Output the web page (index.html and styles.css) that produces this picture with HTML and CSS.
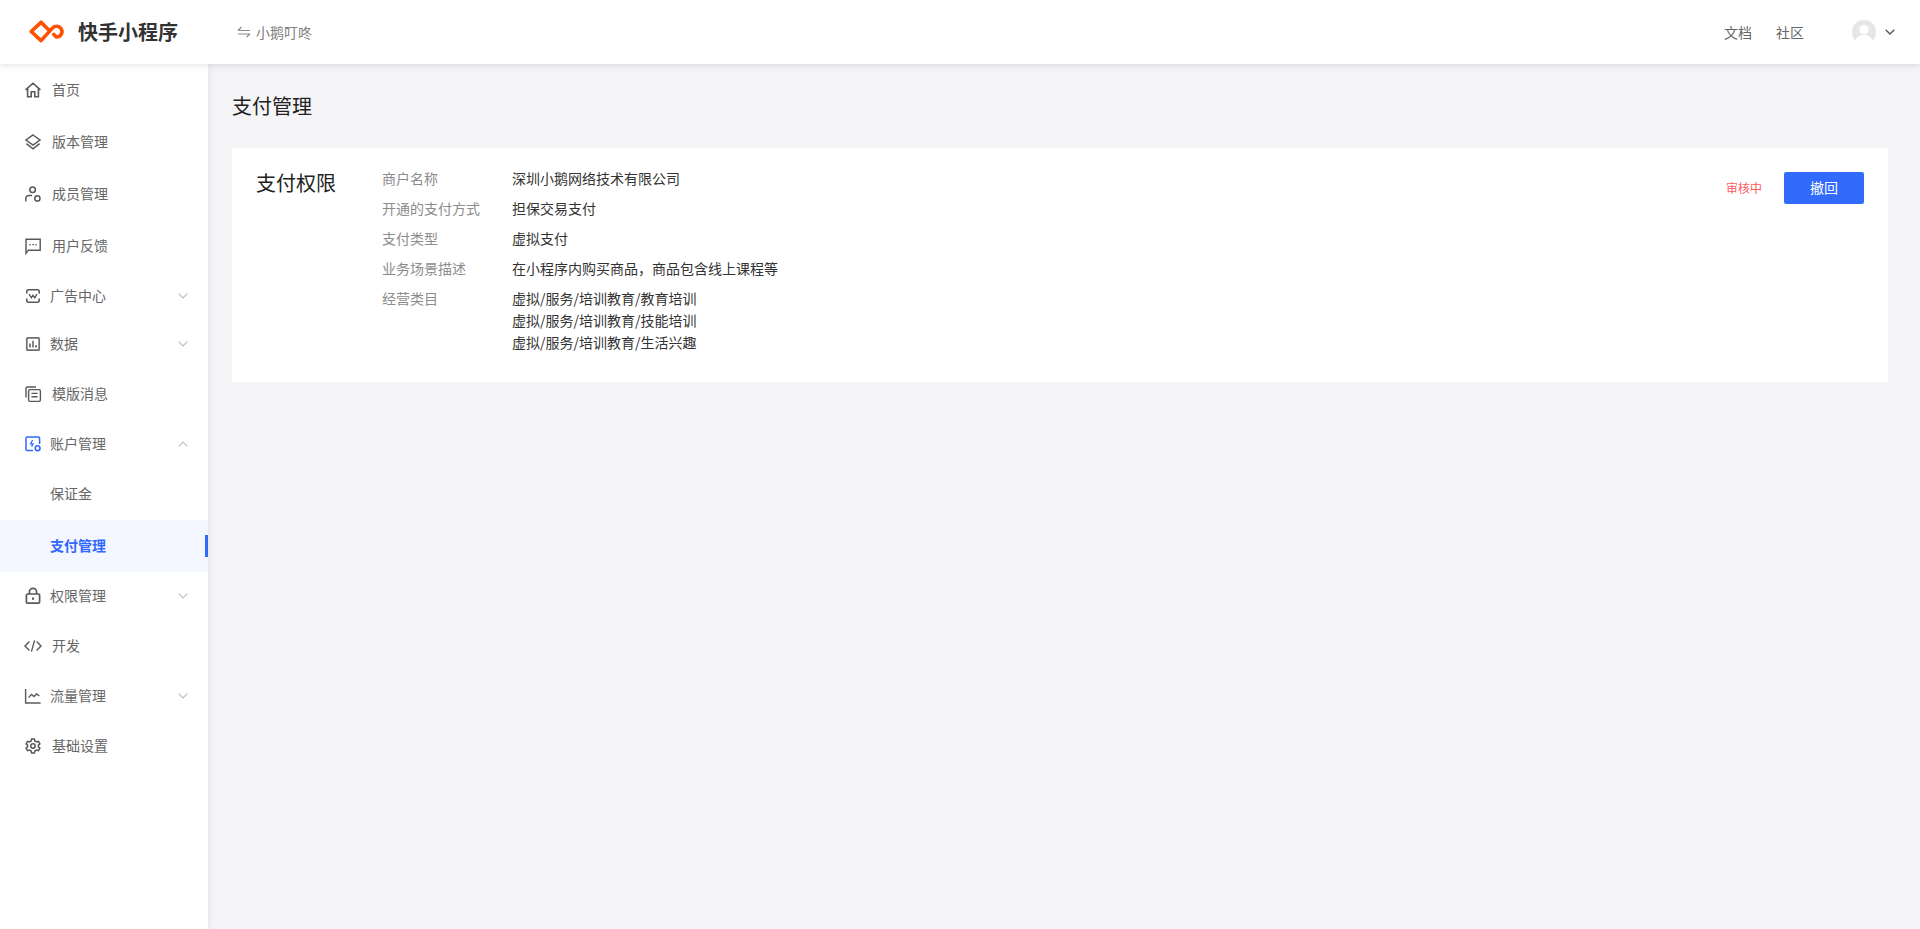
FILE: index.html
```html
<!DOCTYPE html>
<html lang="zh-CN">
<head>
<meta charset="utf-8">
<title>支付管理</title>
<link rel="stylesheet" href="styles.css">
</head>
<body>
<header class="topbar">
  <div class="brand">
    <svg class="logo" viewBox="0 0 36 26" width="36" height="26" fill="none" stroke="#ff5000" stroke-width="3.6" stroke-linejoin="round" stroke-linecap="round">
      <path d="M13 3.400 3.200 12.500 13 21.600 24.200 9.400A5.400 5.400 0 1 1 28.400 18L25.800 15.400"/>
      <path d="M13 3.400 20.600 10.800"/>
    </svg>
    <span class="brand-name">快手小程序</span>
  </div>
  <div class="app-switch">
    <svg class="switch-icon" viewBox="0 0 14 12" width="14" height="12" fill="none" stroke="#8c8c8c" stroke-width="1.200">
      <path d="M1 4.500 H13 M1 4.500 L4.500 1"/>
      <path d="M13 8 H1 M13 8 L9.500 11"/>
    </svg>
    <span>小鹅叮咚</span>
  </div>
  <nav class="top-links">
    <a>文档</a>
    <a>社区</a>
  </nav>
  <div class="account">
    <svg class="avatar" viewBox="0 0 24 24" width="24" height="24">
      <circle cx="12" cy="12" r="12" fill="#e6e6e6"/>
      <circle cx="12" cy="9.600" r="4.800" fill="#fff"/>
      <path d="M3.600 20.400C5 16.400 8 15 12 15c4 0 7 1.400 8.400 5.400C18 22.800 15 24 12 24c-3 0-6-1.200-8.400-3.600Z" fill="#fff"/>
    </svg>
    <svg class="chev-dark" viewBox="0 0 10 6" width="10" height="6" fill="none" stroke="#555" stroke-width="1.300"><path d="M.7.7 5 5 9.300.7"/></svg>
  </div>
</header>

<div class="shell">
  <aside class="sidebar">
    <a class="item">
      <svg class="ico" viewBox="0 0 16 16" fill="none" stroke="#595959" stroke-width="1.600"><path d="M.6 7.800 8 1.200l7.400 6.600M2.600 6.200V14.800h3.600V9.800h3.600v5h3.600V6.200"/></svg>
      <span>首页</span>
    </a>
    <a class="item">
      <svg class="ico" viewBox="0 0 16 16" fill="none" stroke="#595959" stroke-width="1.500"><path d="M8 1 15 6 8 11 1 6Z"/><path d="M1.400 9.600 8 14.800l6.600-5.200"/></svg>
      <span>版本管理</span>
    </a>
    <a class="item">
      <svg class="ico" viewBox="0 0 16 16" fill="none" stroke="#595959" stroke-width="1.500"><circle cx="7.600" cy="3.800" r="2.800"/><path d="M.8 15.400v-2.800c0-2 1.400-3.200 3.400-3.200H7"/><circle cx="12.400" cy="12.400" r="2.600"/></svg>
      <span>成员管理</span>
    </a>
    <a class="item">
      <svg class="ico" viewBox="0 0 16 16" fill="none" stroke="#595959" stroke-width="1.400"><path d="M1 15.400V1.200H15.200V12.200H3.400L1 15.400Z"/><path d="M4.400 6.600h1.400M7.400 6.600h1.400M10.400 6.600h1.400" stroke-width="1.200"/></svg>
      <span>用户反馈</span>
    </a>
    <a class="item sub">
      <svg class="ico" viewBox="0 0 16 16" fill="none" stroke="#595959" stroke-width="1.600"><path d="M1.800 5.600V3.200A1.400 1.400 0 0 1 3.200 1.800h9.600a1.400 1.400 0 0 1 1.400 1.400v2.400M1.800 10.400v2.400a1.400 1.400 0 0 0 1.400 1.400h9.600a1.400 1.400 0 0 0 1.400-1.400v-2.400"/><path d="M4 6.200 6.400 9.800 8 7.200l1.800 2.600 2.200-3.600" stroke-width="1.400"/></svg>
      <span class="label">广告中心</span>
      <svg class="chev" viewBox="0 0 10 6" fill="none" stroke="#bfbfbf" stroke-width="1.200"><path d="M.6.6 5 5 9.400.6"/></svg>
    </a>
    <a class="item sub">
      <svg class="ico" viewBox="0 0 16 16" fill="none" stroke="#6e6e6e" stroke-width="1.700"><rect x="1.800" y="1.800" width="12.400" height="12.400" rx="1"/><path d="M5 7.400v4.200M8 4.800v6.800M11 9v2.600"/></svg>
      <span class="label">数据</span>
      <svg class="chev" viewBox="0 0 10 6" fill="none" stroke="#bfbfbf" stroke-width="1.200"><path d="M.6.6 5 5 9.400.6"/></svg>
    </a>
    <a class="item">
      <svg class="ico" viewBox="0 0 16 16" fill="none" stroke="#595959" stroke-width="1.400"><path d="M1 11.600V2.400C1 1.600 1.600 1 2.400 1h8.600"/><rect x="3.600" y="3.600" width="11.800" height="11.800" rx="1.400"/><path d="M6.400 7.400h6.200M6.400 10.800h6.200"/></svg>
      <span>模版消息</span>
    </a>
    <a class="item sub open">
      <svg class="ico" viewBox="0 0 16 16" fill="none" stroke="#3268fb" stroke-width="1.500"><path d="M8 14.600H2.400A1.400 1.400 0 0 1 1 13.200V2.400A1.400 1.400 0 0 1 2.400 1h10.800a1.400 1.400 0 0 1 1.400 1.400V8"/><path d="M7.600 4 5.600 7.800h2.400L6.600 10.600" stroke-width="1.300"/><circle cx="12.600" cy="12.200" r="2.400" stroke-width="1.600"/></svg>
      <span class="label">账户管理</span>
      <svg class="chev" viewBox="0 0 10 6" fill="none" stroke="#bfbfbf" stroke-width="1.200"><path d="M.6 5.400 5 1 9.400 5.400"/></svg>
    </a>
    <a class="subitem">保证金</a>
    <a class="subitem active">支付管理</a>
    <a class="item sub">
      <svg class="ico" viewBox="0 0 16 16" fill="none" stroke="#595959" stroke-width="1.700"><rect x="1.400" y="6" width="13.200" height="9.200" rx="1.200"/><path d="M4.400 6V4a3.600 3.600 0 0 1 7.200 0v2"/><path d="M8 9.400v2.400" stroke-width="2"/></svg>
      <span class="label">权限管理</span>
      <svg class="chev" viewBox="0 0 10 6" fill="none" stroke="#bfbfbf" stroke-width="1.200"><path d="M.6.6 5 5 9.400.6"/></svg>
    </a>
    <a class="item">
      <svg class="ico" viewBox="0 0 16 16" fill="none" stroke="#595959" stroke-width="1.400"><path d="M4.400 3.600 0 8l4.400 4.400M11.600 3.600 16 8l-4.400 4.400M9.600 2.400 6.400 13.600"/></svg>
      <span>开发</span>
    </a>
    <a class="item sub">
      <svg class="ico" viewBox="0 0 16 16" fill="none" stroke="#595959" stroke-width="1.400"><path d="M.6 1v14h15"/><path d="M3.600 9.600 6.400 6.400l2.600 2.200 2.400-2.600 3 1.800"/></svg>
      <span class="label">流量管理</span>
      <svg class="chev" viewBox="0 0 10 6" fill="none" stroke="#bfbfbf" stroke-width="1.200"><path d="M.6.6 5 5 9.400.6"/></svg>
    </a>
    <a class="item">
      <svg class="ico" viewBox="0 0 16 16" fill="none" stroke="#595959" stroke-width="1.500"><path d="M6.600 1h2.800l.4 2 1.700 1 2-.6 1.400 2.400-1.500 1.400v1.600l1.500 1.400-1.400 2.400-2-.6-1.700 1-.4 2H6.600l-.4-2-1.700-1-2 .6L1.100 10.200l1.500-1.400V7.200L1.100 5.800l1.400-2.400 2 .6 1.700-1Z"/><circle cx="8" cy="8" r="2.200"/></svg>
      <span>基础设置</span>
    </a>
  </aside>

  <main class="content">
    <h1 class="page-title">支付管理</h1>
    <section class="card">
      <h2 class="card-title">支付权限</h2>
      <dl class="details">
        <div class="row"><dt>商户名称</dt><dd>深圳小鹅网络技术有限公司</dd></div>
        <div class="row"><dt>开通的支付方式</dt><dd>担保交易支付</dd></div>
        <div class="row"><dt>支付类型</dt><dd>虚拟支付</dd></div>
        <div class="row"><dt>业务场景描述</dt><dd>在小程序内购买商品，商品包含线上课程等</dd></div>
        <div class="row"><dt>经营类目</dt><dd>虚拟/服务/培训教育/教育培训<br>虚拟/服务/培训教育/技能培训<br>虚拟/服务/培训教育/生活兴趣</dd></div>
      </dl>
      <div class="status">
        <span class="status-text">审核中</span>
        <button class="btn">撤回</button>
      </div>
    </section>
  </main>
</div>
</body>
</html>
```
FILE: styles.css
```css
* { box-sizing: border-box; }
html, body { height: 100%; }
body {
  margin: 0;
  overflow: hidden;
  background: #f5f5f7;
  color: #222;
  font-family: "Noto Sans CJK SC", "Noto Sans", sans-serif;
  font-size: 14px;
}
.topbar {
  position: relative;
  z-index: 2;
  display: flex;
  align-items: center;
  height: 64px;
  padding-left: 28px;
  background: #fff;
  box-shadow: 0 2px 6px rgba(0, 0, 0, .1);
}
.brand { display: flex; align-items: center; width: 209px; }
.logo { display: block; flex: none; }
.brand-name {
  margin-left: 14px;
  font-size: 20px;
  font-weight: 700;
  line-height: 28px;
  color: #333;
}
.app-switch { display: flex; align-items: center; color: #808080; }
.switch-icon { margin-right: 5px; }
.top-links { display: flex; gap: 24px; margin-left: auto; color: #666; }
.account { display: flex; align-items: center; margin: 0 25px 0 48px; }
.avatar { display: block; }
.chev-dark { margin-left: 9px; }

.shell { display: flex; height: calc(100vh - 64px); }
.sidebar {
  position: relative;
  z-index: 1;
  flex: none;
  width: 208px;
  background: #fff;
  box-shadow: 2px 0 6px rgba(0, 0, 0, .06);
  color: #666;
}
.item { display: flex; align-items: center; height: 52px; padding-left: 25px; }
.item.sub { height: 48px; }
.item > span { padding-bottom: 2px; }
.ico { flex: none; width: 16px; height: 16px; margin-right: 11px; overflow: visible; }
.item.sub .ico { margin-right: 9px; }
.label { flex: 1; }
.chev { flex: none; width: 10px; height: 6px; margin-right: 20px; }
.subitem {
  display: flex;
  align-items: center;
  height: 52px;
  padding: 0 0 2px 50px;
}
.subitem.active {
  position: relative;
  background: #f4f7ff;
  color: #3268fb;
  font-weight: 700;
}
.subitem.active::after {
  content: "";
  position: absolute;
  right: 0;
  top: 15px;
  width: 3px;
  height: 22px;
  background: #3268fb;
}

.content { flex: 1; padding: 0 32px 0 24px; min-width: 0; }
.page-title {
  margin: 0;
  padding-top: 28px;
  font-size: 20px;
  font-weight: 400;
  line-height: 28px;
  color: #222;
}
.card {
  display: flex;
  align-items: flex-start;
  height: 234px;
  margin-top: 28px;
  padding: 24px 24px 0 24px;
  background: #fff;
}
.card-title {
  flex: none;
  width: 126px;
  margin: 0;
  font-size: 20px;
  font-weight: 400;
  line-height: 22px;
  color: #222;
}
.details { flex: 1; margin: -5px 0 0; }
.row { display: flex; line-height: 22px; margin-bottom: 8px; }
.row dt { flex: none; width: 130px; color: #8c8c8c; }
.row dd { margin: 0; color: #333; }
.status { display: flex; align-items: center; }
.status-text { font-size: 12px; color: #fe5a5f; margin-right: 22px; padding-bottom: 2px; }
.btn {
  width: 80px;
  height: 32px;
  padding: 0 0 2px;
  border: 0;
  border-radius: 2px;
  background: #326bfb;
  color: #fff;
  font: inherit;
}
```
